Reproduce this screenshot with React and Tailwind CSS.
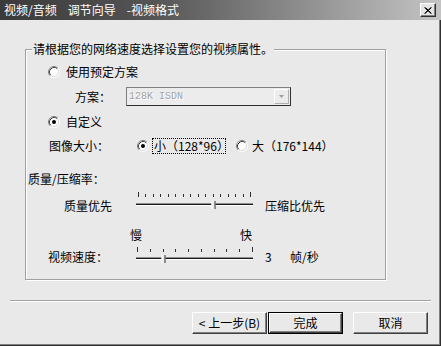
import React from "react";

function Radio({ checked }) {
  return (
    <svg width="12" height="12" viewBox="0 0 12 12" className="shrink-0">
      <circle cx="6" cy="6" r="5" fill="#fff" />
      <path d="M2.11 9.89A5.5 5.5 0 0 1 9.89 2.11" stroke="#808080" fill="none" />
      <path d="M9.89 2.11A5.5 5.5 0 0 1 2.11 9.89" stroke="#fff" fill="none" />
      <path d="M2.82 9.18A4.5 4.5 0 0 1 9.18 2.82" stroke="#404040" fill="none" />
      <path d="M9.18 2.82A4.5 4.5 0 0 1 2.82 9.18" stroke="#d8d8d8" fill="none" />
      {checked && <circle cx="6" cy="6" r="2" fill="#000" />}
    </svg>
  );
}

function Slider({ ticks, x0, x1, value, trackY }) {
  const step = (x1 - x0) / (ticks - 1);
  const xs = Array.from({ length: ticks }, (_, i) => Math.round(x0 + i * step) + 0.5);
  const tx = Math.round(x0 + value * step) + 0.5;
  return (
    <svg width="120" height="20" viewBox="0 0 120 20" className="shrink-0">
      {xs.map((x, i) => (
        <line
          key={i}
          x1={x}
          x2={x}
          y1={i === 0 || i === ticks - 1 ? 0 : 2}
          y2={5}
          stroke="#303030"
        />
      ))}
      <line x1="1" x2="118" y1={trackY - 1 + 0.5} y2={trackY - 1 + 0.5} stroke="#909090" />
      <line x1="1" x2="118" y1={trackY + 0.5} y2={trackY + 0.5} stroke="#1a1a1a" />
      <line x1="1" x2="118" y1={trackY + 1 + 0.5} y2={trackY + 1 + 0.5} stroke="#ffffff" />
      <polygon
        points={`${tx - 2},${trackY + 5} ${tx - 2},${trackY - 2} ${tx},${trackY - 4} ${tx + 2},${trackY - 2} ${tx + 2},${trackY + 5}`}
        fill="#e9e9e9"
      />
      <line x1={tx - 1.5} x2={tx - 1.5} y1={trackY - 3} y2={trackY + 5} stroke="#fff" />
      <line x1={tx + 1.5} x2={tx + 1.5} y1={trackY - 3} y2={trackY + 5} stroke="#303030" />
    </svg>
  );
}

function Btn({ children, def }) {
  if (def) {
    return (
      <div className="w-[75px] h-[22px] border border-black">
        <div className="w-full h-full flex items-center justify-center border border-t-white border-l-white border-r-[#404040] border-b-[#404040] shadow-[inset_-1px_-1px_0_#808080] text-[12px] leading-none">
          {children}
        </div>
      </div>
    );
  }
  return (
    <div className="w-[75px] h-[22px] flex items-center justify-center border border-t-white border-l-white border-r-[#404040] border-b-[#404040] shadow-[inset_-1px_-1px_0_#808080] text-[12px] leading-none">
      {children}
    </div>
  );
}

export default function App() {
  return (
    <div className="w-[441px] h-[346px] bg-[#e9e9e9] flex flex-col font-['Noto_Sans_CJK_SC','Noto_Sans',sans-serif] text-[12px] text-black shadow-[inset_-1px_-1px_0_#303030,inset_-2px_-2px_0_#808080] overflow-hidden">
      {/* title bar */}
      <div className="h-[20px] shrink-0 flex items-center justify-between pl-[4px] pr-[5px] bg-[linear-gradient(to_right,#3a3a3a,#555555_35%,#c4c4c4)]">
        <div className="flex text-white text-[12px] leading-[20px]">
          <span>视频/音频</span>
          <span className="ml-[11px]">调节向导</span>
          <span className="ml-[11px]">-视频格式</span>
        </div>
        <div className="w-[16px] h-[14px] flex items-center justify-center bg-[#e4e4e4] border border-t-white border-l-white border-r-[#303030] border-b-[#303030] shadow-[inset_-1px_-1px_0_#808080]">
          <svg width="8" height="7" viewBox="0 0 8 7">
            <path d="M0.5 0.5L7 6.5M1.5 0.5L7.5 6.5M7 0.5L0.5 6.5M7.5 0.5L1 6.5" stroke="#000" strokeWidth="1" />
          </svg>
        </div>
      </div>

      {/* group box */}
      <div className="ml-[25px] mt-[29px] w-[361px] h-[231px] shrink-0 border border-[#a0a0a0] shadow-[inset_1px_1px_0_#fff,1px_1px_0_#fff] flex flex-col">
        <div className="-mt-[9px] ml-[6px] w-fit px-[1px] bg-[#e9e9e9] leading-[16px]">
          请根据您的网络速度选择设置您的视频属性。
        </div>

        <div className="mt-[7px] h-[16px] pl-[22px] flex items-center gap-[6px] leading-[16px]">
          <Radio />
          <span>使用预定方案</span>
        </div>

        <div className="mt-[7px] h-[19px] pl-[49px] flex items-center">
          <span className="w-[51px] leading-[16px]">方案：</span>
          <div className="w-[165px] h-[19px] flex border border-t-[#808080] border-l-[#808080] border-r-[#303030] border-b-[#303030] bg-[#ececec]">
            <span className="flex-1 pl-[2px] text-[#a4a4a4] font-['Liberation_Mono',monospace] text-[10px] leading-[17px] [text-shadow:1px_1px_0_#fff]">
              128K ISDN
            </span>
            <div className="w-[15px] h-[15px] m-[1px] flex items-center justify-center bg-[#ececec] border border-t-white border-l-white border-r-[#b0b0b0] border-b-[#b0b0b0]">
              <svg width="5" height="3" viewBox="0 0 5 3">
                <polygon points="0,0 5,0 2.5,3" fill="#a0a0a0" />
              </svg>
            </div>
          </div>
        </div>

        <div className="mt-[8px] h-[16px] pl-[22px] flex items-center gap-[6px] leading-[16px]">
          <Radio checked />
          <span>自定义</span>
        </div>

        <div className="mt-[8px] h-[16px] pl-[23px] flex items-center leading-[16px]">
          <span className="w-[88px]">图像大小：</span>
          <Radio checked />
          <span className="ml-[3px] w-[74px] h-[16px] pl-[1px] border border-dotted border-black leading-[14px]">小（128*96）</span>
          <span className="ml-[10px]">
            <Radio />
          </span>
          <span className="ml-[4px]">大（176*144）</span>
        </div>

        <div className="mt-[17px] h-[16px] pl-[2px] leading-[16px]">质量/压缩率：</div>

        <div className="mt-[5px] h-[22px] pl-[38px] flex items-start">
          <span className="w-[71px] mt-[6px] leading-[16px]">质量优先</span>
          <Slider ticks={16} x0={3} x1={115} value={10} trackY={12} />
          <span className="ml-[10px] mt-[6px] leading-[16px]">压缩比优先</span>
        </div>

        <div className="mt-[13px] h-[16px] pl-[104px] flex leading-[16px]">
          <span className="w-[110px]">慢</span>
          <span>快</span>
        </div>

        <div className="mt-[4px] h-[20px] pl-[22px] flex items-start">
          <span className="w-[87px] mt-[2px] leading-[16px]">视频速度：</span>
          <Slider ticks={10} x0={2} x1={117} value={2} trackY={11} />
          <span className="ml-[10px] w-[25px] mt-[2px] leading-[16px]">3</span>
          <span className="mt-[2px] leading-[16px]">帧/秒</span>
        </div>
      </div>

      {/* separator */}
      <div className="mt-[20px] mx-[10px] h-[2px] shrink-0 border-t border-t-[#a0a0a0] border-b border-b-white" />

      {/* buttons */}
      <div className="mt-[10px] pr-[13px] flex justify-end">
        <Btn>&lt; 上一步(B)</Btn>
        <div className="ml-[1px]">
          <Btn def>完成</Btn>
        </div>
        <div className="ml-[10px]">
          <Btn>取消</Btn>
        </div>
      </div>
    </div>
  );
}
